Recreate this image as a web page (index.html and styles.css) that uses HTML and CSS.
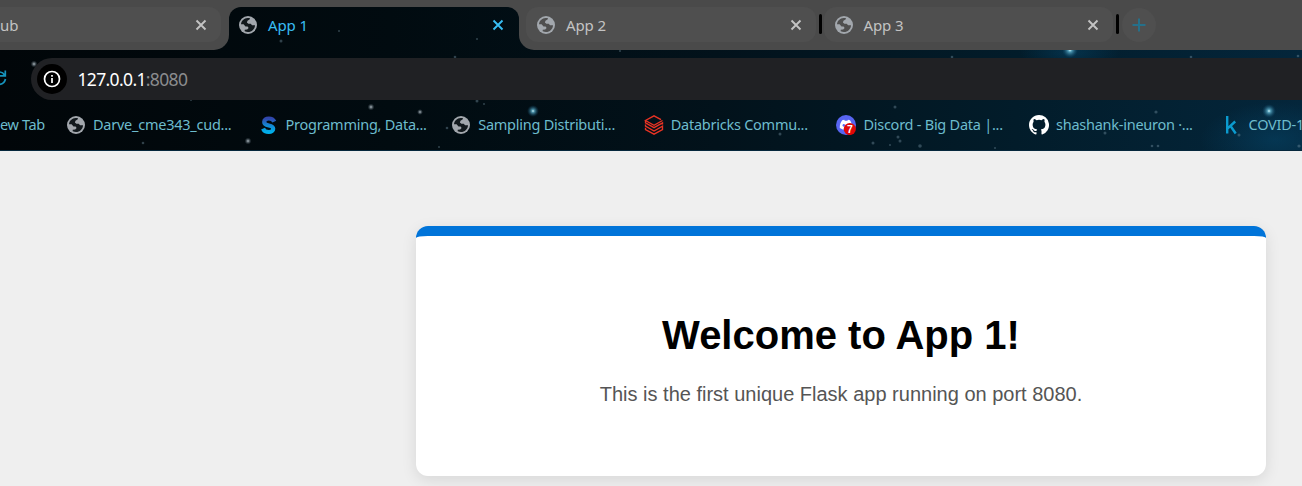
FILE: index.html
```html
<!DOCTYPE html>
<html lang="en">
<head>
<meta charset="utf-8">
<title>App 1</title>
<link rel="stylesheet" href="styles.css">
</head>
<body>
<svg class="defs" width="0" height="0" aria-hidden="true">
  <defs>
    <linearGradient id="s-fill" x1="0" y1="0" x2="0" y2="1"><stop offset="0" stop-color="#3147ad"/><stop offset=".5" stop-color="#1386d2"/><stop offset="1" stop-color="#00aee9"/></linearGradient>
    <symbol id="globe" viewBox="0 0 18 18">
      <circle cx="9" cy="9" r="9" fill="#a2a7ad"/>
      <path class="land" d="M2 8.200C2.300 4.800 5 2.200 8.600 2h2.200v1.300L8.500 4.800 7.900 6.500l1.500 1.300h2.300l1.400 1.400h2.900c-.1 3.800-3.200 6.800-7 6.800-1.200 0-2.300-.3-3.300-.8v-1.400l2.500-.2 1.400-1.700-1-1.400H6.500L4.600 8.200H2z"/>
    </symbol>
    <symbol id="cross" viewBox="0 0 12 12"><path d="M1.500 1.500l9 9m0-9l-9 9" fill="none" stroke="currentColor" stroke-width="1.900"/></symbol>
  </defs>
</svg>
<header class="browser">
  <svg class="sky" viewBox="0 0 1302 151" aria-hidden="true">
    <defs>
      <linearGradient id="night"><stop offset="0" stop-color="#010609"/><stop offset=".3" stop-color="#010b10"/><stop offset=".55" stop-color="#02121b"/><stop offset=".78" stop-color="#021c2a"/><stop offset="1" stop-color="#04263b"/></linearGradient>
      <radialGradient id="glow"><stop offset="0" stop-color="#d5fbff"/><stop offset=".25" stop-color="#5fb1cc" stop-opacity=".8"/><stop offset="1" stop-color="#0a4a6e" stop-opacity="0"/></radialGradient>
      <radialGradient id="faint"><stop offset="0" stop-color="#b4bfc6"/><stop offset="1" stop-color="#45545e" stop-opacity="0"/></radialGradient>
      <radialGradient id="haze"><stop offset="0" stop-color="#075078" stop-opacity=".4"/><stop offset="1" stop-color="#075078" stop-opacity="0"/></radialGradient>
    </defs>
    <rect width="1302" height="151" fill="url(#night)"/>
    <ellipse cx="1275" cy="140" rx="75" ry="38" fill="url(#haze)"/>
    <ellipse cx="1070" cy="52" rx="50" ry="18" fill="url(#haze)"/>
    <g fill="url(#glow)"><circle cx="533" cy="111" r="6"/><circle cx="1070" cy="50" r="8"/><circle cx="1269" cy="111" r="7"/></g>
    <g fill="url(#faint)"><circle cx="34" cy="64" r="3.500"/><circle cx="248" cy="141" r="3.500"/><circle cx="371" cy="107" r="3.500"/><circle cx="420" cy="112" r="3"/></g>
    <g fill="#7794a5" opacity=".4"><circle cx="143" cy="143" r="1.300"/><circle cx="281" cy="41" r="1.500"/><circle cx="339" cy="31" r="1"/><circle cx="477" cy="39" r="1"/><circle cx="455" cy="57" r="1.300"/><circle cx="447" cy="128" r="1.300"/><circle cx="439" cy="147" r="1"/><circle cx="477" cy="101" r="1.500"/><circle cx="484" cy="104" r="1"/><circle cx="780" cy="134" r="1.500"/><circle cx="873" cy="143" r="1.500"/><circle cx="895" cy="107" r="1.500"/><circle cx="898" cy="137" r="1.500"/><circle cx="900" cy="141" r="1.500"/><circle cx="920" cy="146" r="1.800"/><circle cx="890" cy="145" r="1"/><circle cx="952" cy="57" r="1.300"/><circle cx="1105" cy="133" r="1.500"/><circle cx="1156" cy="112" r="1.600"/><circle cx="1152" cy="146" r="1.300"/><circle cx="1158" cy="146" r="1.300"/><circle cx="1239" cy="135" r="1.500"/><circle cx="1299" cy="146" r="1.600"/><circle cx="1191" cy="57" r="1.300"/><circle cx="1298" cy="56" r="1.300"/><circle cx="995" cy="148" r="1"/><circle cx="191" cy="100" r="1"/><circle cx="620" cy="51" r="1"/></g>
  </svg>

  <div class="tabs">
    <div class="strip strip-left">
      <div class="tab tab-cut"><span class="label">ub</span><svg class="close"><use href="#cross"/></svg></div>
    </div>
    <div class="active-wrap">
      <div class="active-tab"><svg class="globe"><use href="#globe"/></svg><span class="label">App 1</span><svg class="close"><use href="#cross"/></svg></div>
    </div>
    <div class="strip strip-right">
      <div class="tab"><svg class="globe"><use href="#globe"/></svg><span class="label">App 2</span><svg class="close"><use href="#cross"/></svg></div>
      <i class="divider"></i>
      <div class="tab"><svg class="globe"><use href="#globe"/></svg><span class="label">App 3</span><svg class="close"><use href="#cross"/></svg></div>
      <i class="divider"></i>
      <div class="new-tab"><svg width="14" height="14" viewBox="0 0 14 14"><path d="M7 .5v13M.5 7h13" stroke="#25708a" stroke-width="2"/></svg></div>
    </div>
  </div>

  <div class="toolbar">
    <svg class="reload" width="8" height="18" viewBox="0 0 8 18"><path d="M0 3C2 3.200 3.500 4.200 4.500 6M5.300 1.500v5.300H0M5.500 10C4.800 12.800 3 14.800 0 15.500" fill="none" stroke="#1694bd" stroke-width="1.700"/></svg>
    <div class="address">
      <span class="info"><svg width="18" height="18" viewBox="0 0 18 18"><circle cx="9" cy="9" r="7.500" fill="none" stroke="#fff" stroke-width="1.700"/><path d="M9 8v5M9 5v1.800" stroke="#fff" stroke-width="1.700"/></svg></span>
      <span class="url">127.0.0.1<span class="port">:8080</span></span>
    </div>
  </div>

  <nav class="bookmarks">
    <a class="bookmark first"><span>ew Tab</span></a>
    <a class="bookmark"><svg viewBox="-1 -1 20 20"><use href="#globe" width="18" height="18"/></svg><span>Darve_cme343_cud...</span></a>
    <a class="bookmark"><svg viewBox="0 0 20 20"><path d="M15.300 6.200C14.300 4 12.300 3 9.800 3 7 3 5.200 4.400 5.200 6.500c0 4.800 9 2.300 9 6.700 0 2-1.900 3.300-4.400 3.300-2.800 0-4.800-1.200-5.800-3.400" fill="none" stroke="url(#s-fill)" stroke-width="4.200" transform="translate(0 .5)"/></svg><span>Programming, Data...</span></a>
    <a class="bookmark"><svg viewBox="-1 -1 20 20"><use href="#globe" width="18" height="18"/></svg><span>Sampling Distributi...</span></a>
    <a class="bookmark"><svg viewBox="0 0 20 20"><path d="M18.500 5.500L10 10.300 1.500 5.500 10 .8l7 3.900M1.500 5.500v2.300l8.500 4.800 8.500-4.800V9.500M1.500 9.500v1.700l8.500 4.800 8.500-4.800V13M1.500 12.800v1.700l8.500 4.700 8.500-4.700v-2" fill="none" stroke="#e83324" stroke-width="1.350"/></svg><span>Databricks Commu...</span></a>
    <a class="bookmark"><svg viewBox="0 0 20 20"><circle cx="10" cy="10" r="10" fill="#5865f2"/><path d="M6.200 5.300l2-.6.600 1.100h2.600l.6-1.100 2 .6c1.500 2.300 2.400 4.900 2.200 7.700l-3 1.500H6.800l-3-1.500c-.2-2.900.7-5.500 2.400-7.700z" fill="#fff"/><ellipse cx="7.800" cy="10.300" rx="1.200" ry="1.400" fill="#5865f2"/><circle cx="13.800" cy="14" r="6.100" fill="#e00707"/><text class="count" x="13.800" y="17.700">7</text></svg><span>Discord - Big Data |...</span></a>
    <a class="bookmark"><svg viewBox="0 0 16 16"><path fill="#fff" d="M8 0C3.580 0 0 3.580 0 8c0 3.540 2.290 6.530 5.470 7.590.4.070.55-.17.55-.38 0-.19-.01-.82-.01-1.490-2.010.37-2.530-.49-2.690-.94-.09-.23-.48-.94-.82-1.130-.28-.15-.68-.52-.01-.53.63-.01 1.080.58 1.230.82.72 1.210 1.870.87 2.330.66.07-.52.28-.87.51-1.070-1.780-.2-3.640-.89-3.640-3.950 0-.87.31-1.590.82-2.150-.08-.2-.36-1.020.08-2.120 0 0 .67-.21 2.200.82a7.600 7.600 0 0 1 4 0c1.530-1.040 2.200-.82 2.200-.82.44 1.100.16 1.920.08 2.120.51.56.82 1.270.82 2.150 0 3.070-1.870 3.750-3.650 3.950.29.25.54.73.54 1.480 0 1.070-.01 1.930-.01 2.200 0 .21.15.46.55.38A8 8 0 0 0 8 0z"/></svg><span>shashank-ineuron ·...</span></a>
    <a class="bookmark"><svg viewBox="0 0 20 20"><path d="M5.200 1v17.500M13.200 6.500l-7.500 6.800M8.200 10.500l5.500 8" fill="none" stroke="#0b9bcf" stroke-width="2.400"/></svg><span>COVID-1</span></a>
  </nav>
</header>

<main class="page">
  <section class="card">
    <h1>Welcome to App 1!</h1>
    <p>This is the first unique Flask app running on port 8080.</p>
  </section>
</main>
</body>
</html>
```
FILE: styles.css
```css
* { box-sizing: border-box; }
html, body { height: 100%; }
body { margin: 0; overflow: hidden; display: flex; flex-direction: column; background: #efefef; font-family: "Liberation Sans", sans-serif; }
svg { display: block; flex: none; }
.defs { position: absolute; }
.land { fill: var(--land, #12191d); }
.browser { position: relative; flex: none; width: 1302px; height: 151px; overflow: hidden; font-family: "Noto Sans", sans-serif; border-bottom: 1px solid #05273c; }
.sky { position: absolute; inset: 0; width: 1302px; height: 151px; }
.tabs, .toolbar, .bookmarks { position: relative; display: flex; }
.tabs { height: 50px; }
.strip { display: flex; align-items: flex-start; padding-top: 7px; background: #4a4a4a; }
.strip-left { width: 229px; flex: none; border-bottom-right-radius: 15px; }
.strip-right { --land: #4f4f4f; flex: 1; padding-left: 7px; border-bottom-left-radius: 15px; }
.tab { display: flex; align-items: center; width: 290px; height: 35px; padding: 0 14px 0 11px; border-radius: 12px; background: #4f4f4f; color: #c3c3c3; }
.tab-cut { width: 221px; padding-left: 0; border-radius: 0 12px 12px 0; }
.active-wrap { width: 290px; height: 50px; flex: none; overflow: hidden; padding-top: 7px; }
.active-tab { display: flex; align-items: flex-start; height: 80px; padding: 9px 15px 0 10px; border-radius: 12px; box-shadow: 0 0 0 14px #4a4a4a; color: #38bdf3; }
.active-tab .label { margin-top: -1px; }
.active-tab .close { margin-top: 3px; }
.globe { width: 18px; height: 18px; margin-right: 11px; }
.close { width: 12px; height: 12px; margin-left: auto; }
.label { font-size: 15px; line-height: 20px; letter-spacing: -.1px; white-space: pre; }
.divider { width: 3px; height: 20px; margin: 7px 2px 0 3px; border-radius: 2px; background: #000; }
.strip-right .tab + .divider + .tab { width: 289.5px; margin-left: -.5px; }
.new-tab { display: grid; place-items: center; width: 34px; height: 34px; margin: 1px 0 0 1px; border-radius: 50%; background: #4f4f4f; }
.toolbar { height: 58px; padding-top: 8px; }
.reload { margin-top: 11px; width: 8px; }
.address { display: flex; align-items: center; width: 1300px; flex: none; height: 42px; margin-left: 23px; padding-left: 6px; border-radius: 21px; background: #202124; }
.info { display: grid; place-items: center; width: 30px; height: 30px; border-radius: 50%; background: #000; }
.url { margin-left: 10.5px; font-size: 17.5px; letter-spacing: -.65px; color: #fff; white-space: pre; }
.port { color: #8b8c8e; }
.bookmarks { height: 34px; }
.bookmark { display: flex; align-items: center; gap: 7px; width: 192.600px; flex: none; color: #6dbccd; font-size: 14.500px; letter-spacing: -.25px; white-space: nowrap; }
.bookmark span { padding-bottom: 2px; }
.bookmark svg { width: 20px; height: 20px; }
.first { width: 66px; letter-spacing: -.35px; }
.count { font: bold 10.500px "Liberation Sans", sans-serif; fill: #fff; text-anchor: middle; letter-spacing: 0; }
.page { flex: 1; padding: 75px 0 0 416px; background: #efefef; }
.card { width: 850px; height: 250px; padding-top: 76px; border-top: 10px solid #0074d9; border-radius: 12px; background: #fff; box-shadow: 0 4px 15px rgba(0,0,0,.1); text-align: center; }
.card h1 { margin: 0; font-size: 40px; line-height: 46px; color: #000; }
.card p { margin: 24px 0 0; font-size: 20px; line-height: 24px; color: #555; }
```
